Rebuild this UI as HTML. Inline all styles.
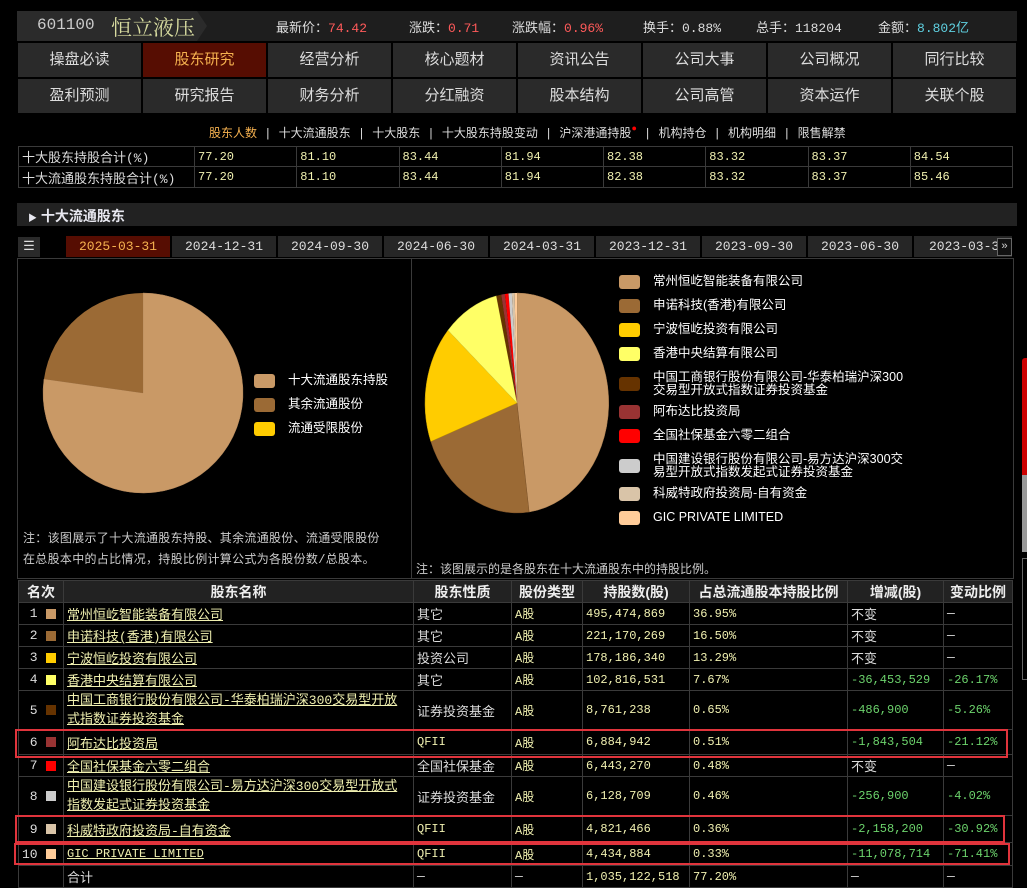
<!DOCTYPE html>
<html><head><meta charset="utf-8"><style>
*{margin:0;padding:0;box-sizing:border-box}
body{width:1027px;height:886px;background:#000;overflow:hidden;position:relative;font-family:"Liberation Mono","Noto Sans CJK SC",monospace;font-size:13px;color:#ddd}
.a{position:absolute}
.hdr{left:17px;top:11px;width:1000px;height:30px;background:#1e1e1e}
.hdr span{position:absolute;top:6px;font-size:13px;color:#ddd;font-family:"Liberation Mono","Noto Sans CJK SC",monospace}
.r{color:#ff5a5a}
.nav div{position:absolute;width:123px;height:34px;background:#2a2a2a;color:#ddd;font-size:15px;text-align:center;line-height:34px;font-family:"Liberation Sans","Noto Sans CJK SC",sans-serif}
.nav div.on{background:#560d02;color:#f5b14f}
table{border-collapse:collapse;position:absolute}
td{border:1px solid #3a3a3a;padding:0 3px;white-space:nowrap}
.y{color:#f0f0b0;font-size:12px}
.g{color:#6cd36c;font-size:12px}
.u{color:#f0f0b0;text-decoration:underline}
.sw{display:inline-block;width:10px;height:10px;vertical-align:middle;margin-left:8px}
.tab{position:absolute;top:236px;height:21px;width:104px;background:#262626;color:#ddd;text-align:center;line-height:21px;font-size:13px}
.lg{position:absolute;font-size:12.5px;color:#fff;font-family:"Liberation Sans","Noto Sans CJK SC",sans-serif;line-height:13px}
.lg i{position:absolute;left:-34px;width:21px;height:14px;border-radius:3px}
.box{position:absolute;border:2.5px solid #e0343c}
</style></head><body>
<div class="a hdr">
 <div class="a" style="left:0;top:0;width:180px;height:30px;background:#2b2b2b"></div>
 <div class="a" style="left:180px;top:0;width:0;height:0;border-top:15px solid transparent;border-bottom:15px solid transparent;border-left:10px solid #2b2b2b"></div>
 <span style="left:20px;top:5px;font-size:16px;color:#ccc">601100</span>
 <span style="left:94px;top:1px;font-size:21px;color:#d8dca0;font-family:'Noto Serif CJK SC',serif">恒立液压</span>
 <span style="left:259px">最新价：<b class="r" style="font-weight:normal">74.42</b></span>
 <span style="left:392px">涨跌：<b class="r" style="font-weight:normal">0.71</b></span>
 <span style="left:495px">涨跌幅：<b class="r" style="font-weight:normal">0.96%</b></span>
 <span style="left:626px">换手：0.88%</span>
 <span style="left:739px">总手：118204</span>
 <span style="left:861px">金额：<b style="font-weight:normal;color:#5fd0e0">8.802亿</b></span>
</div>
<div class="nav">
 <div style="left:18px;top:43px">操盘必读</div><div class="on" style="left:143px;top:43px">股东研究</div><div style="left:268px;top:43px">经营分析</div><div style="left:393px;top:43px">核心题材</div><div style="left:518px;top:43px">资讯公告</div><div style="left:643px;top:43px">公司大事</div><div style="left:768px;top:43px">公司概况</div><div style="left:893px;top:43px">同行比较</div>
 <div style="left:18px;top:79px">盈利预测</div><div style="left:143px;top:79px">研究报告</div><div style="left:268px;top:79px">财务分析</div><div style="left:393px;top:79px">分红融资</div><div style="left:518px;top:79px">股本结构</div><div style="left:643px;top:79px">公司高管</div><div style="left:768px;top:79px">资本运作</div><div style="left:893px;top:79px">关联个股</div>
</div>
<div class="a" style="left:209px;top:124px;font-size:12px;color:#ddd;white-space:nowrap"><span style="color:#f5b14f">股东人数</span> | 十大流通股东 | 十大股东 | 十大股东持股变动 | 沪深港通持股<span style="color:#f00;font-size:9px;vertical-align:top">●</span> | 机构持仓 | 机构明细 | 限售解禁</div>
<table style="left:18px;top:146px;width:995px;font-size:13px">
<tr style="height:20px"><td style="width:176px">十大股东持股合计(%)</td><td class="y">77.20</td><td class="y">81.10</td><td class="y">83.44</td><td class="y">81.94</td><td class="y">82.38</td><td class="y">83.32</td><td class="y">83.37</td><td class="y">84.54</td></tr>
<tr style="height:21px"><td>十大流通股东持股合计(%)</td><td class="y">77.20</td><td class="y">81.10</td><td class="y">83.44</td><td class="y">81.94</td><td class="y">82.38</td><td class="y">83.32</td><td class="y">83.37</td><td class="y">85.46</td></tr>
</table>
<div class="a" style="left:17px;top:203px;width:1000px;height:23px;background:#222"></div>
<div class="a" style="left:28px;top:206px;font-size:14px;font-weight:bold;color:#e8e8f0;font-family:'Liberation Sans','Noto Sans CJK SC',sans-serif"><span style="font-size:9px;vertical-align:middle">▶</span> 十大流通股东</div>
<div class="a" style="left:18px;top:237px;width:22px;height:20px;background:#2a2a2a;color:#ddd;font-size:13px;text-align:center;line-height:20px">☰</div>
<div class="tab" style="left:66px;background:#560d02;color:#f5b14f">2025-03-31</div>
<div class="tab" style="left:172px">2024-12-31</div>
<div class="tab" style="left:278px">2024-09-30</div>
<div class="tab" style="left:384px">2024-06-30</div>
<div class="tab" style="left:490px">2024-03-31</div>
<div class="tab" style="left:596px">2023-12-31</div>
<div class="tab" style="left:702px">2023-09-30</div>
<div class="tab" style="left:808px">2023-06-30</div>
<div class="tab" style="left:914px;width:98px;text-align:left;padding-left:15px">2023-03-3</div>
<div class="a" style="left:997px;top:238px;width:15px;height:18px;border:1px solid #666;background:#111;color:#ccc;font-size:11px;text-align:center;line-height:16px">»</div>
<div class="a" style="left:17px;top:258px;width:997px;height:321px;border:1px solid #3a3a3a"></div>
<div class="a" style="left:411px;top:258px;width:1px;height:321px;background:#3a3a3a"></div>
<svg class="a" style="left:0;top:0" width="1027" height="886">
 <path d="M143 393 L143 293 A100 100 0 1 1 44 379 Z" fill="#c99966" stroke="#b0855a" stroke-width=".5"/>
 <path d="M143 393 L44 379 A100 100 0 0 1 143 293 Z" fill="#9b6a35"/>
 <g stroke-width=".5">
 <path d="M517 403 L517 293 A92 110 0 0 1 529.1 512 Z" fill="#c99966" stroke="#a67c50"/>
 <path d="M517 403 L529.1 512 A92 110 0 0 1 430.8 441.5 Z" fill="#9b6a35" stroke="#7c5228"/>
 <path d="M517 403 L430.8 441.5 A92 110 0 0 1 448 330.3 Z" fill="#ffcc00" stroke="#c9a000"/>
 <path d="M517 403 L448 330.3 A92 110 0 0 1 496.3 295.9 Z" fill="#ffff66" stroke="#cccc44"/>
 <path d="M517 403 L496.3 295.9 A92 110 0 0 1 501.2 294.6 Z" fill="#663300"/>
 <path d="M517 403 L501.2 294.6 A92 110 0 0 1 504.9 294 Z" fill="#993333"/>
 <path d="M517 403 L504.9 294 A92 110 0 0 1 508.5 293.5 Z" fill="#ff0000"/>
 <path d="M517 403 L508.5 293.5 A92 110 0 0 1 511.9 293.1 Z" fill="#cccccc"/>
 <path d="M517 403 L511.9 293.1 A92 110 0 0 1 514.6 293 Z" fill="#d9c4a8"/>
 <path d="M517 403 L514.6 293 A92 110 0 0 1 517 293 Z" fill="#ffcc99"/>
 </g>
</svg>
<div class="lg" style="left:288px;top:374px"><i style="background:#c99966"></i>十大流通股东持股</div>
<div class="lg" style="left:288px;top:398px"><i style="background:#9b6a35"></i>其余流通股份</div>
<div class="lg" style="left:288px;top:422px"><i style="background:#ffcc00"></i>流通受限股份</div>
<div class="a" style="left:23px;top:529px;font-size:12px;color:#ccc;line-height:21px;letter-spacing:.3px">注：该图展示了十大流通股东持股、其余流通股份、流通受限股份<br>在总股本中的占比情况，持股比例计算公式为各股份数/总股本。</div>
<div class="lg" style="left:653px;top:275px"><i style="background:#c99966"></i>常州恒屹智能装备有限公司</div>
<div class="lg" style="left:653px;top:299px"><i style="background:#9b6a35"></i>申诺科技(香港)有限公司</div>
<div class="lg" style="left:653px;top:323px"><i style="background:#ffcc00"></i>宁波恒屹投资有限公司</div>
<div class="lg" style="left:653px;top:347px"><i style="background:#ffff66"></i>香港中央结算有限公司</div>
<div class="lg" style="left:653px;top:371px"><i style="background:#663300;top:6px"></i>中国工商银行股份有限公司-华泰柏瑞沪深300<br>交易型开放式指数证券投资基金</div>
<div class="lg" style="left:653px;top:405px"><i style="background:#993333"></i>阿布达比投资局</div>
<div class="lg" style="left:653px;top:429px"><i style="background:#ff0000"></i>全国社保基金六零二组合</div>
<div class="lg" style="left:653px;top:453px"><i style="background:#cccccc;top:6px"></i>中国建设银行股份有限公司-易方达沪深300交<br>易型开放式指数发起式证券投资基金</div>
<div class="lg" style="left:653px;top:487px"><i style="background:#d9c4a8"></i>科威特政府投资局-自有资金</div>
<div class="lg" style="left:653px;top:511px"><i style="background:#ffcc99"></i>GIC PRIVATE LIMITED</div>
<div class="a" style="left:416px;top:560px;font-size:12px;color:#ccc">注：该图展示的是各股东在十大流通股东中的持股比例。</div>
<table style="left:18px;top:580px;width:995px;font-size:13px">
<tr style="height:22px;background:#222;font-weight:bold;color:#eee;text-align:center;font-family:'Liberation Sans','Noto Sans CJK SC',sans-serif;font-size:14px"><td style="width:45px;padding:0">名次</td><td style="width:350px">股东名称</td><td style="width:98px">股东性质</td><td style="width:71px">股份类型</td><td style="width:107px">持股数(股)</td><td style="width:158px">占总流通股本持股比例</td><td style="width:96px">增减(股)</td><td>变动比例</td></tr>
<tr style="height:22px"><td>&nbsp;1<span class="sw" style="background:#c99966"></span></td><td class="u">常州恒屹智能装备有限公司</td><td>其它</td><td class="y">A股</td><td class="y">495,474,869</td><td class="y">36.95%</td><td>不变</td><td>—</td></tr>
<tr style="height:22px"><td>&nbsp;2<span class="sw" style="background:#9b6a35"></span></td><td class="u">申诺科技(香港)有限公司</td><td>其它</td><td class="y">A股</td><td class="y">221,170,269</td><td class="y">16.50%</td><td>不变</td><td>—</td></tr>
<tr style="height:22px"><td>&nbsp;3<span class="sw" style="background:#ffcc00"></span></td><td class="u">宁波恒屹投资有限公司</td><td>投资公司</td><td class="y">A股</td><td class="y">178,186,340</td><td class="y">13.29%</td><td>不变</td><td>—</td></tr>
<tr style="height:22px"><td>&nbsp;4<span class="sw" style="background:#ffff66"></span></td><td class="u">香港中央结算有限公司</td><td>其它</td><td class="y">A股</td><td class="y">102,816,531</td><td class="y">7.67%</td><td class="g">-36,453,529</td><td class="g">-26.17%</td></tr>
<tr style="height:39px"><td>&nbsp;5<span class="sw" style="background:#663300"></span></td><td class="u" style="white-space:normal;line-height:19px">中国工商银行股份有限公司-华泰柏瑞沪深300交易型开放式指数证券投资基金</td><td>证券投资基金</td><td class="y">A股</td><td class="y">8,761,238</td><td class="y">0.65%</td><td class="g">-486,900</td><td class="g">-5.26%</td></tr>
<tr style="height:25px"><td>&nbsp;6<span class="sw" style="background:#993333"></span></td><td class="u">阿布达比投资局</td><td class="y">QFII</td><td class="y">A股</td><td class="y">6,884,942</td><td class="y">0.51%</td><td class="g">-1,843,504</td><td class="g">-21.12%</td></tr>
<tr style="height:22px"><td>&nbsp;7<span class="sw" style="background:#ff0000"></span></td><td class="u">全国社保基金六零二组合</td><td>全国社保基金</td><td class="y">A股</td><td class="y">6,443,270</td><td class="y">0.48%</td><td>不变</td><td>—</td></tr>
<tr style="height:38px"><td>&nbsp;8<span class="sw" style="background:#cccccc"></span></td><td class="u" style="white-space:normal;line-height:19px">中国建设银行股份有限公司-易方达沪深300交易型开放式指数发起式证券投资基金</td><td>证券投资基金</td><td class="y">A股</td><td class="y">6,128,709</td><td class="y">0.46%</td><td class="g">-256,900</td><td class="g">-4.02%</td></tr>
<tr style="height:27px"><td>&nbsp;9<span class="sw" style="background:#d9c4a8"></span></td><td class="u">科威特政府投资局-自有资金</td><td class="y">QFII</td><td class="y">A股</td><td class="y">4,821,466</td><td class="y">0.36%</td><td class="g">-2,158,200</td><td class="g">-30.92%</td></tr>
<tr style="height:23px"><td>10<span class="sw" style="background:#ffcc99"></span></td><td class="u" style="font-size:12px">GIC PRIVATE LIMITED</td><td class="y">QFII</td><td class="y">A股</td><td class="y">4,434,884</td><td class="y">0.33%</td><td class="g">-11,078,714</td><td class="g">-71.41%</td></tr>
<tr style="height:22px"><td></td><td>合计</td><td>—</td><td>—</td><td class="y">1,035,122,518</td><td class="y">77.20%</td><td>—</td><td>—</td></tr>
</table>
<div class="box" style="left:15px;top:729px;width:993px;height:29px"></div>
<div class="box" style="left:15px;top:815px;width:990px;height:28px"></div>
<div class="box" style="left:14px;top:843px;width:996px;height:22px"></div>
<div class="a" style="left:1022px;top:358px;width:5px;height:117px;background:#c00;border-radius:3px 0 0 0"></div>
<div class="a" style="left:1022px;top:475px;width:5px;height:77px;background:#999"></div>
<div class="a" style="left:1022px;top:558px;width:5px;height:122px;border:1px solid #666;border-right:none"></div>
</body></html>
